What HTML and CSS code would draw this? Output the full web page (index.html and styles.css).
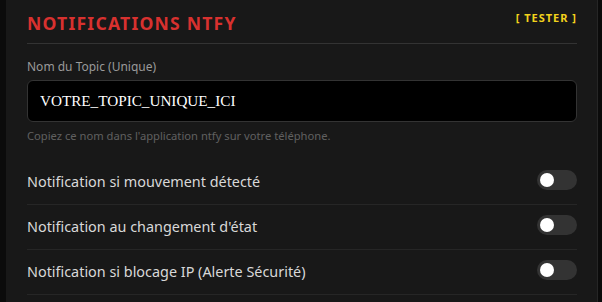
FILE: index.html
```html
<!DOCTYPE html>
<html lang="fr">
<head>
<meta charset="utf-8">
<title>Notifications ntfy</title>
<link rel="stylesheet" href="styles.css">
</head>
<body>
<section class="panel">
  <header class="panel-head">
    <h2 class="panel-title">NOTIFICATIONS NTFY</h2>
    <button class="test-btn" type="button">[ TESTER ]</button>
  </header>
  <div class="field">
    <label class="field-label" for="topic">Nom du Topic (Unique)</label>
    <input class="field-input" id="topic" type="text" value="VOTRE_TOPIC_UNIQUE_ICI">
    <p class="field-help">Copiez ce nom dans l'application ntfy sur votre téléphone.</p>
  </div>
  <div class="toggle-row">
    <span class="toggle-label">Notification si mouvement détecté</span>
    <span class="switch"><span class="knob"></span></span>
  </div>
  <div class="toggle-row">
    <span class="toggle-label">Notification au changement d'état</span>
    <span class="switch"><span class="knob"></span></span>
  </div>
  <div class="toggle-row">
    <span class="toggle-label">Notification si blocage IP (Alerte Sécurité)</span>
    <span class="switch"><span class="knob"></span></span>
  </div>
</section>
</body>
</html>
```
FILE: styles.css
```css
html, body {
  margin: 0;
  padding: 0;
  background: #0b0b0b;
  height: 100%;
  overflow: hidden;
}
body {
  padding: 0 4px 0 6px;
  font-family: "Noto Sans", "Open Sans", sans-serif;
}
.panel {
  background: #181818;
  border-right: 1px solid #262626;
  padding: 0 20px 0 21px;
  min-height: 302px;
  box-sizing: border-box;
}
.panel-head {
  display: flex;
  justify-content: space-between;
  align-items: flex-start;
  padding-top: 10.5px;
  padding-bottom: 8px;
  border-bottom: 1px solid #333333;
}
.panel-title {
  margin: 0;
  font-size: 17.6px;
  line-height: 24px;
  font-weight: 700;
  letter-spacing: 1.2px;
  color: #d8312f;
}
.test-btn {
  margin: 0;
  padding: 0;
  border: 0;
  background: none;
  font-family: "Noto Sans", sans-serif;
  font-size: 11px;
  line-height: 14px;
  font-weight: 700;
  letter-spacing: 1px;
  color: #f2d21c;
}
.field {
  padding-top: 14.5px;
  display: flex;
  flex-direction: column;
}
.field-label {
  font-size: 12px;
  line-height: 17px;
  color: #9a9a9a;
  margin-bottom: 4.5px;
}
.field-input {
  height: 42px;
  box-sizing: border-box;
  background: #000000;
  border: 1px solid #333333;
  border-radius: 6px;
  padding: 0 12px;
  font-family: "Liberation Serif", serif;
  font-size: 15.2px;
  color: #ffffff;
  outline: none;
}
.field-help {
  margin: 6px 0 0;
  font-size: 11.2px;
  line-height: 15px;
  color: #606060;
}
.toggle-row {
  display: flex;
  justify-content: space-between;
  align-items: flex-start;
  padding: 10px 0;
  border-bottom: 1px solid #262626;
}
.field + .toggle-row {
  margin-top: 17px;
}
.toggle-label {
  font-size: 14.4px;
  line-height: 24px;
  color: #d8d8d8;
}
.switch {
  width: 40px;
  height: 20px;
  border-radius: 10px;
  background: #333333;
  display: flex;
  align-items: center;
  padding-left: 3px;
  box-sizing: border-box;
}
.knob {
  width: 14px;
  height: 14px;
  border-radius: 50%;
  background: #ffffff;
}
```
